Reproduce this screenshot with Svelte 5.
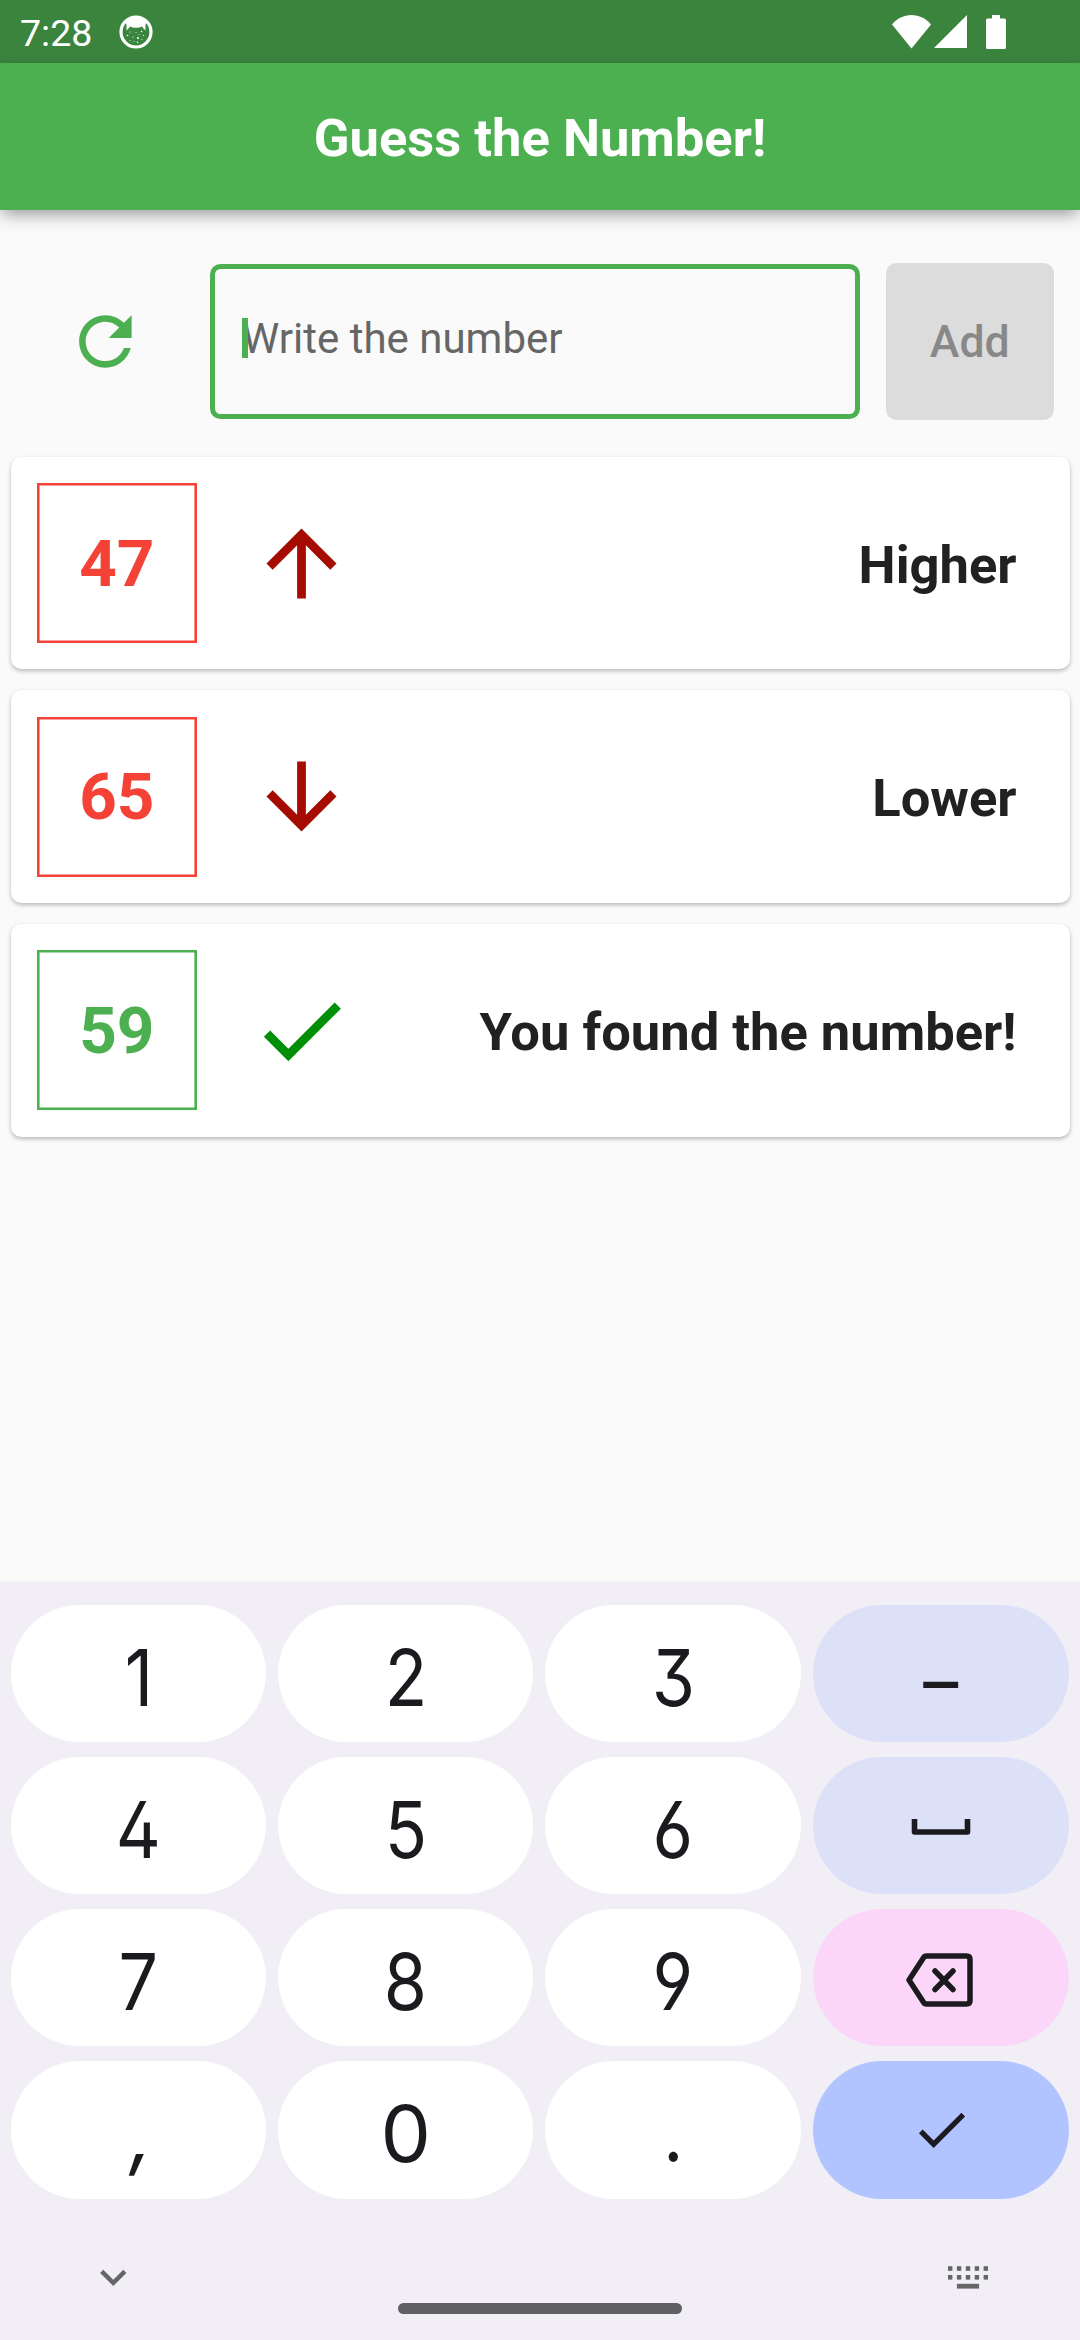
<script>
  const guesses = [
    { value: 47, hint: 'Higher', kind: 'up' },
    { value: 65, hint: 'Lower', kind: 'down' },
    { value: 59, hint: 'You found the number!', kind: 'found' }
  ];

  const icons = {
    up: 'M4 12l1.41 1.41L11 7.83V20h2V7.83l5.58 5.59L20 12l-8-8-8 8z',
    down: 'M20 12l-1.41-1.41L13 16.17V4h-2v12.17l-5.58-5.59L4 12l8 8 8-8z',
    found: 'M9 16.17L4.83 12l-1.42 1.41L9 19 21 7l-1.41-1.41z'
  };

  const keys = [
    '1', '2', '3', 'minus',
    '4', '5', '6', 'space',
    '7', '8', '9', 'delete',
    ',', '0', '.', 'enter'
  ];
</script>

<div class="screen">
  <header class="status">
    <span class="time">7:28</span>
    <svg class="cat" viewBox="0 0 34 34">
      <circle cx="17" cy="17" r="15" fill="none" stroke="#fff" stroke-width="3.2" />
      <path d="M6 7C9 3 13 1.500 17 1.500S25 3 28 7L26.500 9.500V15.500L24.500 13.500 23 11.500C19.500 13.300 14.500 13.300 11 11.500L9.500 13.500 7.500 15.500V9.500z" fill="#fff" />
      <g fill="#fff">
        <circle cx="11" cy="17" r=".6" /><circle cx="17" cy="17.500" r=".5" /><circle cx="22.500" cy="16.500" r=".8" />
        <circle cx="8.500" cy="20.500" r=".8" /><circle cx="14" cy="22" r=".6" /><circle cx="19" cy="23" r="1" />
        <circle cx="24.500" cy="20.500" r=".6" /><circle cx="11" cy="25.500" r=".5" /><circle cx="18.500" cy="27.200" r=".8" />
        <circle cx="23" cy="24.500" r=".5" /><circle cx="20" cy="19.500" r=".5" /><circle cx="15" cy="26.500" r=".5" />
      </g>
    </svg>
    <svg class="signals" viewBox="0 0 114 34">
      <path d="M0 9.500C5 3.500 12 0 19.500 0S34 3.500 39 9.500L19.500 33.500z" />
      <path d="M75 0V33H42z" />
      <path d="M100 0h8v3.500h4.500a1.500 1.500 0 0 1 1.500 1.500v27.500a1.500 1.500 0 0 1-1.500 1.500h-17a1.500 1.500 0 0 1-1.500-1.500V5a1.500 1.500 0 0 1 1.500-1.500h4.500z" />
    </svg>
  </header>

  <div class="appbar"><h1>Guess the Number!</h1></div>

  <main>
    <div class="entry">
      <div class="refresh">
        <svg viewBox="0 0 24 24"><path d="M17.650 6.350C16.200 4.900 14.210 4 12 4c-4.420 0-7.990 3.580-7.990 8s3.570 8 7.990 8c3.730 0 6.840-2.550 7.730-6h-2.080c-.82 2.330-3.040 4-5.650 4-3.310 0-6-2.690-6-6s2.690-6 6-6c1.660 0 3.140.69 4.220 1.780L13 11h7V4l-2.350 2.350z" /></svg>
      </div>
      <div class="field"><i class="caret"></i><span>Write the number</span></div>
      <div class="add">Add</div>
    </div>

    {#each guesses as guess}
      <article class={guess.kind}>
        <div class="number">{guess.value}</div>
        <svg viewBox="0 0 24 24"><path d={icons[guess.kind]} /></svg>
        <p>{guess.hint}</p>
      </article>
    {/each}
  </main>

  <section class="keyboard">
    <div class="keys">
      {#each keys as key}
        <div class="key {key.length > 1 ? key : 'char'}" class:zero={key === '0'} class:comma={key === ','}>
          {#if key === 'minus'}
            <span>–</span>
          {:else if key === 'space'}
            <svg width="60" height="16" viewBox="0 0 60 16"><path d="M3.500 2.500V13H56.500V2.500" fill="none" stroke="#1b1b1f" stroke-width="5.600" stroke-linecap="square" stroke-linejoin="round" /></svg>
          {:else if key === 'delete'}
            <svg width="68" height="54" viewBox="0 0 68 54"><g fill="none" stroke="#1b1b1f" stroke-width="5.500" stroke-linejoin="round" stroke-linecap="round"><path d="M20.500 3H60.500Q64 3 64 6.500V47.500Q64 51 60.500 51H20.500Q18.500 51 17.500 49.200L3 27 17.500 4.800Q18.500 3 20.500 3z" /><path d="M29 18L47 36.500M47 18L29 36.500" /></g></svg>
          {:else if key === 'enter'}
            <svg width="63" height="63" viewBox="0 0 24 24"><path d={icons.found} fill="#1b1b1f" /></svg>
          {:else}
            <span>{key}</span>
          {/if}
        </div>
      {/each}
    </div>
    <footer>
      <svg class="chevron" viewBox="0 0 24 24"><path d="M16.590 8.590L12 13.170 7.410 8.590 6 10l6 6 6-6z" /></svg>
      <div class="home"></div>
      <svg class="switch" viewBox="0 0 40 23">
        {#each [0, 1, 2, 3, 4] as column}
          <rect x={column * 8.9} y="0.200" width="4.400" height="4.600" />
          <rect x={column * 8.9} y="9" width="4.400" height="4.600" />
        {/each}
        <rect x="8.900" y="17.800" width="22.200" height="4.800" />
      </svg>
    </footer>
  </section>
</div>

<style>
  :global(body) { margin: 0; }
  h1, p { margin: 0; }
  svg { display: block; flex: none; }
  .screen {
    width: 1080px;
    height: 2340px;
    display: flex;
    flex-direction: column;
    overflow: hidden;
    background: #fafafa;
    font-family: Roboto, sans-serif;
  }
  .status {
    height: 63px;
    box-sizing: border-box;
    padding: 0 74px 0 20px;
    display: flex;
    align-items: center;
    background: #3b843e;
    color: #fff;
  }
  .time { width: 99px; font-size: 37.500px; line-height: 44px; padding-top: 3px; }
  .cat { width: 34px; height: 34px; }
  .signals { width: 114px; height: 34px; margin-left: auto; fill: #fff; }
  .appbar {
    height: 147px;
    flex: none;
    display: flex;
    align-items: center;
    justify-content: center;
    background: #4caf50;
    color: #fff;
    box-shadow: 0 6px 16px -2px rgba(0, 0, 0, .4);
  }
  h1 { font-size: 52.500px; line-height: 62px; font-weight: 700; padding-top: 3px; }
  main { flex: 1; padding-top: 52.500px; }
  .entry {
    display: grid;
    grid-template-columns: 210px 649.500px 168px;
    height: 157.500px;
    align-items: center;
    margin-bottom: 36.750px;
  }
  .refresh { display: flex; justify-content: center; }
  .refresh svg { width: 78.750px; height: 78.750px; fill: #4caf50; }
  .field {
    height: 155px;
    box-sizing: border-box;
    border: 5px solid #4caf50;
    border-radius: 10.500px;
    padding: 0 0 6px 27px;
    display: flex;
    align-items: center;
    font-size: 42px;
    color: #666;
  }
  .caret { width: 6px; height: 40px; margin-right: -6px; background: #4caf50; z-index: 1; }
  .add {
    margin-left: 26.250px;
    width: 168px;
    height: 157.500px;
    box-sizing: border-box;
    padding-top: 2px;
    border-radius: 10.500px;
    background: #dcdcdc;
    color: #888;
    display: flex;
    align-items: center;
    justify-content: center;
    font-size: 44.625px;
    font-weight: 500;
  }
  article {
    height: 212.625px;
    box-sizing: border-box;
    margin: 0 10.500px 21px;
    padding: 0 53px 0 26.250px;
    display: flex;
    align-items: center;
    background: #fff;
    border-radius: 10.500px;
    box-shadow: 0 2px 4px rgba(0, 0, 0, .27);
    color: #f44336;
  }
  article.found { color: #4caf50; }
  .number {
    width: 160.125px;
    height: 160.125px;
    box-sizing: border-box;
    display: flex;
    align-items: center;
    justify-content: center;
    box-shadow: inset 0 0 0 2.600px currentColor;
    font-size: 65.625px;
    font-weight: 700;
  }
  article svg { width: 105px; height: 105px; margin-left: 52.500px; fill: #a50b00; }
  .found svg { fill: #008f07; }
  p { margin-left: auto; color: #212121; font-size: 52.500px; font-weight: 700; padding-top: 3px; }
  .keyboard {
    height: 758px;
    box-sizing: border-box;
    padding: 23px 11px 0;
    background: #f1eff5;
    box-shadow: 0 0 5px rgba(0, 0, 0, .06);
  }
  .keys {
    display: grid;
    grid-template-columns: 255px 255px 256px 256px;
    grid-template-rows: 137px 137px 137px 138px;
    justify-content: space-between;
    row-gap: 15px;
  }
  .key {
    display: flex;
    align-items: center;
    justify-content: center;
    border-radius: 69px;
    background: #fff;
    color: #1b1b1f;
  }
  .key span {
    font: 400 78.500px/96px Inter, sans-serif;
    font-feature-settings: 'ss01', 'cv03', 'cv04';
    transform: scaleX(.89);
    padding-top: 8px;
  }
  .zero span { transform: scaleX(1.02); }
  .comma span { transform: skewX(-10deg); padding-left: 10px; }
  .minus, .space { background: #dde1f8; }
  .minus span { padding-top: 14px; }
  .delete { background: #fcd6f9; }
  .delete svg { margin-top: 4px; margin-left: -2px; }
  .space svg { margin-top: 3px; }
  .enter { background: #b2c4ff; }
  .enter svg { margin-bottom: 2px; }
  footer {
    height: 117px;
    margin-top: 25px;
    display: grid;
    grid-template-columns: 387px 284px 387px;
    align-items: start;
  }
  .chevron { width: 52.500px; height: 52.500px; margin: 27px 0 0 76px; fill: #666; }
  .home { height: 11px; border-radius: 5.500px; background: #606062; margin-top: 79px; }
  .switch { width: 40px; height: 23px; margin: 42px 0 0 266px; fill: #666; }
</style>
